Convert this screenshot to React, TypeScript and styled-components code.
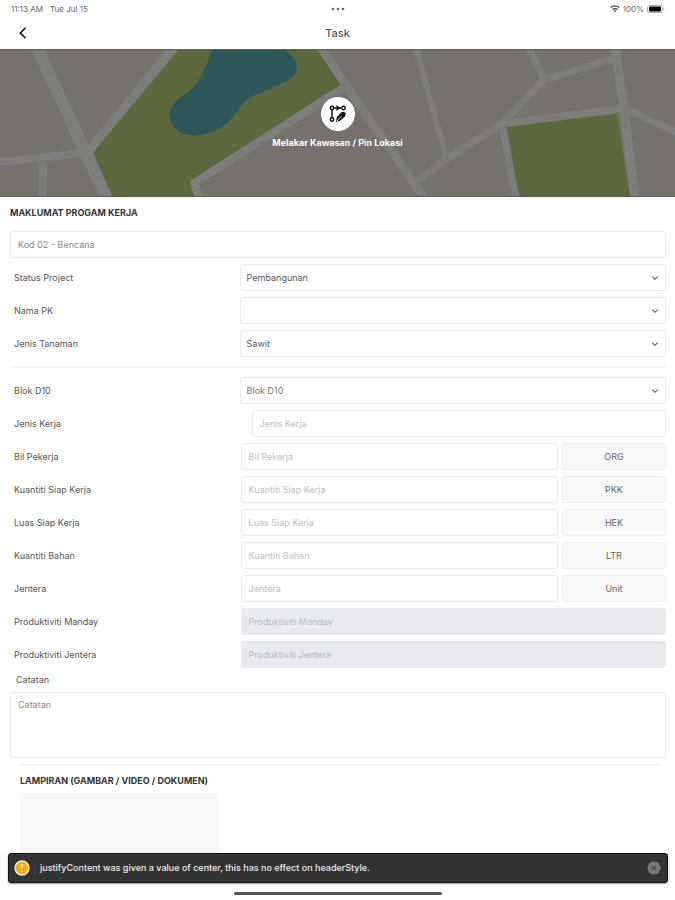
import React from "react";
import styled, { createGlobalStyle } from "styled-components";

const GlobalStyle = createGlobalStyle`
  *, *::before, *::after { box-sizing: border-box; }
  body {
    margin: 0;
    background: #fff;
    color: #555;
    font-family: Inter, "Liberation Sans", sans-serif;
    font-size: 9px;
    line-height: 12px;
  }
  button, input, select, textarea { font: inherit; margin: 0; }
`;

const Screen = styled.div`
  height: 100vh;
  overflow: hidden;
  display: flex;
  flex-direction: column;
`;

const StatusBar = styled.div`
  display: grid;
  grid-template-columns: 1fr auto 1fr;
  align-items: center;
  flex: none;
  height: 17px;
  padding: 0 10px 0 11px;
  font-size: 8px;
  color: #666;
`;

const StatusGroup = styled.div<{ $end?: boolean }>`
  display: flex;
  align-items: center;
  gap: ${(p) => (p.$end ? 3 : 7)}px;
  justify-content: ${(p) => (p.$end ? "flex-end" : "flex-start")};
`;

const Header = styled.header`
  display: grid;
  grid-template-columns: 1fr auto 1fr;
  align-items: center;
  flex: none;
  height: 32px;
  padding: 0 16px;
`;

const BackButton = styled.button`
  display: flex;
  width: 14px;
  padding: 0;
  border: 0;
  background: none;
  color: #111;
`;

const Title = styled.h1`
  margin: 0;
  font-size: 11px;
  font-weight: 500;
  line-height: 16px;
  color: #555;
`;

const MapBanner = styled.section`
  display: grid;
  flex: none;
  height: 148px;
  border-top: 1px solid #5f5f5c;
  border-bottom: 1px solid #595957;
  background: #75726b;
  & > * { grid-area: 1 / 1; }
`;

const MapArt = styled.svg`
  display: block;
  width: 100%;
  height: 146px;
`;

const DrawButton = styled.button`
  z-index: 1;
  place-self: center;
  display: flex;
  flex-direction: column;
  align-items: center;
  gap: 6px;
  padding: 0;
  border: 0;
  background: none;
  color: #fff;
  font-size: 9px;
  font-weight: 700;
`;

const DrawCircle = styled.span`
  display: grid;
  place-items: center;
  width: 34px;
  height: 34px;
  border-radius: 50%;
  background: #fff;
  color: #111;
`;

const Form = styled.form`
  display: flex;
  flex-direction: column;
  gap: 6px;
  padding: 10px 9px 0 10px;
`;

const SectionTitle = styled.h2<{ $inset?: boolean }>`
  margin: ${(p) => (p.$inset ? "3px 0 0 10px" : "0 0 6px")};
  font-size: 9px;
  line-height: 12px;
  font-weight: 700;
  color: #333;
`;

const Row = styled.div`
  display: grid;
  grid-template-columns: 35fr 65fr;
  align-items: center;
`;

const Label = styled.label`
  padding-left: 4px;
`;

const NoteLabel = styled.label`
  padding-left: 6px;
`;

const Field = styled.div<{ $indent?: number }>`
  display: flex;
  gap: 4px;
  padding-left: ${(p) => p.$indent ?? 0}px;
`;

const Input = styled.input<{ $muted?: boolean }>`
  min-width: 0;
  width: 100%;
  height: 27px;
  padding: 0 7px;
  border: 1px solid #ececec;
  border-radius: 3px;
  background: #fff;
  color: #777;
  &::placeholder { color: ${(p) => (p.$muted ? "#888" : "#c0c0c0")}; opacity: 1; }
  &:disabled { background: #e8eaed; border-color: #e8eaed; }
  &:disabled::placeholder { color: #b8bcc2; }
`;

const SelectBox = styled.div`
  flex: 1;
  display: grid;
  align-items: center;
  & > * { grid-area: 1 / 1; }
  & > svg { justify-self: end; margin-right: 7px; pointer-events: none; }
`;

const Select = styled.select<{ $soft?: boolean }>`
  appearance: none;
  width: 100%;
  height: 27px;
  padding: 0 24px 0 6px;
  border: 1px solid #ececec;
  border-radius: 3px;
  background: #fff;
  color: ${(p) => (p.$soft ? "#777" : "#555")};
`;

const UnitButton = styled.button`
  flex: none;
  width: 104px;
  height: 27px;
  padding: 0;
  border: 1px solid #efefef;
  border-radius: 3px;
  background: #f8f8f8;
  color: #666;
`;

const Divider = styled.hr<{ $inset?: boolean }>`
  width: auto;
  height: 2px;
  margin: ${(p) => (p.$inset ? "0 6px 0 10px" : "3px 0 3px")};
  border: 0;
  background: #f5f5f5;
`;

const Notes = styled.textarea`
  display: block;
  width: 100%;
  height: 66px;
  padding: 6px 7px;
  resize: none;
  border: 1px solid #ececec;
  border-radius: 3px;
  &::placeholder { color: #888; opacity: 1; }
`;

const NotesGroup = styled.div`
  display: flex;
  flex-direction: column;
  gap: 6px;
`;

const Attachment = styled.div`
  width: 30%;
  min-width: 198px;
  height: 90px;
  margin-left: 10px;
  border: 1px solid #f3f5f6;
  border-radius: 3px;
  background: #f8f9fb;
`;

const BottomOverlay = styled.div`
  position: fixed;
  left: 0;
  right: 0;
  bottom: 0;
  display: flex;
  flex-direction: column;
  align-items: center;
  gap: 9px;
  padding: 0 7px 5px 8px;
  background: #fff;
`;

const Toast = styled.div`
  display: flex;
  align-items: center;
  gap: 4px;
  width: 100%;
  height: 30px;
  padding: 0 6px 0 5px;
  border: 1px solid #111;
  border-radius: 3px;
  background: #333;
  color: #eee;
  box-shadow: 0 1px 2px #0006;
`;

const ToastText = styled.span`
  flex: 1;
  padding-left: 5px;
  border-left: 1px solid #444;
  font-weight: 500;
`;

const DismissButton = styled.button`
  display: flex;
  padding: 0;
  border: 0;
  background: none;
`;

const HomeBar = styled.div`
  width: 208px;
  height: 3px;
  border-radius: 2px;
  background: #555;
`;

const Chevron = () => (
  <svg width="8" height="8" viewBox="0 0 8 8" fill="none" stroke="#555" strokeWidth="1.1" aria-hidden="true">
    <path d="M1.3 2.7 4 5.3l2.7-2.6" />
  </svg>
);

const TownMap = () => (
  <MapArt viewBox="0 0 675 146" preserveAspectRatio="xMidYMid slice" aria-hidden="true">
    <path d="M179 0H317L341 35 190 133 195 147H113L93 102Z" fill="#5c693e" />
    <path d="M507 77 617 64 630 147H519Z" fill="#5c693e" />
    <path
      d="M211 0C206 23 197 35 187 43C173 51 167 61 171 71C175 83 187 87 200 85C215 83 227 76 235 64C243 53 248 47 261 43C278 35 297 29 297 18C297 10 291 5 286 0Z"
      fill="#2e575a"
    />
    <g fill="none" stroke="#7d7e7b" strokeLinejoin="round">
      <path d="M37-2 107 149" strokeWidth="12" />
      <path d="M173-2 88 102" strokeWidth="9" />
      <path d="M0 112 82 103M43 112 42 149" strokeWidth="8" />
      <path d="M321-2 345 34 417 138 425 149" strokeWidth="8" />
      <path d="M346 36 194 133 200 149" strokeWidth="8" />
      <path d="M416-2 446 107" strokeWidth="6" />
      <path d="M417 131 445 110 503 73 544 30 615 8M529-2 544 30" strokeWidth="7" />
      <path d="M615-2 624 58 635 149" strokeWidth="9" />
      <path d="M501 74 624 58 680 84M502 75 516 149" strokeWidth="7" />
    </g>
  </MapArt>
);

const AreaIcon = () => (
  <svg width="20" height="20" viewBox="0 0 20 20" fill="none" stroke="currentColor" strokeWidth="1.5" aria-hidden="true">
    <circle cx="4" cy="4" r="1.700" />
    <circle cx="15.500" cy="4" r="1.700" />
    <circle cx="4" cy="15.500" r="1.700" />
    <path d="M4 6v8M6 4h7" />
    <path d="M8.500 1 12.300 4 8.500 7Z" fill="currentColor" stroke="none" />
    <path d="M8 18 8.800 13 13.500 8.300Q16.500 7 17.700 9.500L17 12.200 12.500 16.500Z" fill="currentColor" stroke="none" />
    <path d="m9 17 4.500-5" stroke="#fff" strokeWidth=".9" />
  </svg>
);

type SelectRowProps = { id: string; label: string; value: string; soft?: boolean };
const SelectRow = ({ id, label, value, soft }: SelectRowProps) => (
  <Row>
    <Label htmlFor={id}>{label}</Label>
    <Field>
      <SelectBox>
        <Select id={id} defaultValue={value} $soft={soft}>
          <option value={value}>{value}</option>
        </Select>
        <Chevron />
      </SelectBox>
    </Field>
  </Row>
);

type InputRowProps = { id: string; label: string; unit?: string; indent?: number; disabled?: boolean };
const InputRow = ({ id, label, unit, indent = 1, disabled }: InputRowProps) => (
  <Row>
    <Label htmlFor={id}>{label}</Label>
    <Field $indent={indent}>
      <Input id={id} placeholder={label} disabled={disabled} />
      {unit && <UnitButton type="button">{unit}</UnitButton>}
    </Field>
  </Row>
);

const measures = [
  { id: "workers", label: "Bil Pekerja", unit: "ORG" },
  { id: "done", label: "Kuantiti Siap Kerja", unit: "PKK" },
  { id: "area", label: "Luas Siap Kerja", unit: "HEK" },
  { id: "material", label: "Kuantiti Bahan", unit: "LTR" },
  { id: "machine", label: "Jentera", unit: "Unit" },
];

export default function App() {
  return (
    <Screen>
      <GlobalStyle />
      <StatusBar>
        <StatusGroup>
          <span>11:13 AM</span>
          <span>Tue Jul 15</span>
        </StatusGroup>
        <svg width="14" height="4" viewBox="0 0 14 4" fill="#666" aria-hidden="true">
          <circle cx="2" cy="2" r="1.300" />
          <circle cx="7" cy="2" r="1.300" />
          <circle cx="12" cy="2" r="1.300" />
        </svg>
        <StatusGroup $end>
          <svg width="10" height="8" viewBox="0 0 10 8" fill="none" stroke="#444" strokeWidth="1.300" aria-hidden="true">
            <path d="M.7 2.600Q5-.7 9.300 2.600M2.500 4.500q2.500-1.900 5 0" />
            <path d="M3.700 5.700q1.300-.9 2.600 0L5 7.200Z" fill="#444" stroke="none" />
          </svg>
          <span>100%</span>
          <svg width="18" height="8" viewBox="0 0 18 8" aria-hidden="true">
            <rect x=".5" y=".5" width="15" height="7" rx="2" fill="#fff" stroke="#aaa" />
            <rect x="2" y="1.500" width="12" height="5" rx="1" fill="#000" />
            <path d="M16.500 3v2q1-.3 1-1t-1-1" fill="#aaa" />
          </svg>
        </StatusGroup>
      </StatusBar>
      <Header>
        <BackButton type="button" aria-label="Kembali">
          <svg width="14" height="14" viewBox="0 0 14 14" fill="none" stroke="currentColor" strokeWidth="1.600" aria-hidden="true">
            <path d="M9.500 1.800 4.300 7l5.200 5.200" />
          </svg>
        </BackButton>
        <Title>Task</Title>
      </Header>
      <MapBanner>
        <TownMap />
        <DrawButton type="button">
          <DrawCircle>
            <AreaIcon />
          </DrawCircle>
          Melakar Kawasan / Pin Lokasi
        </DrawButton>
      </MapBanner>
      <Form>
        <SectionTitle>MAKLUMAT PROGAM KERJA</SectionTitle>
        <Input aria-label="Kod" placeholder="Kod 02 - Bencana" $muted />
        <SelectRow id="status" label="Status Project" value="Pembangunan" />
        <SelectRow id="pk" label="Nama PK" value="" />
        <SelectRow id="crop" label="Jenis Tanaman" value="Sawit" />
        <Divider />
        <SelectRow id="block" label="Blok D10" value="Blok D10" soft />
        <InputRow id="work" label="Jenis Kerja" indent={12} />
        {measures.map((m) => (
          <InputRow key={m.id} {...m} />
        ))}
        <InputRow id="manday" label="Produktiviti Manday" disabled />
        <InputRow id="prodMachine" label="Produktiviti Jentera" disabled />
        <NotesGroup>
          <NoteLabel htmlFor="notes">Catatan</NoteLabel>
          <Notes id="notes" placeholder="Catatan" />
        </NotesGroup>
        <Divider $inset />
        <SectionTitle $inset>LAMPIRAN (GAMBAR / VIDEO / DOKUMEN)</SectionTitle>
        <Attachment />
      </Form>
      <BottomOverlay>
        <Toast role="alert">
          <svg width="16" height="16" viewBox="0 0 16 16" aria-hidden="true">
            <circle cx="8" cy="8" r="7" fill="#f7ab1b" stroke="#fff1cf" strokeWidth="1.300" />
            <path d="M8 4v5M8 10.500v1.500" stroke="#fff1cf" strokeWidth="1.400" />
          </svg>
          <ToastText>justifyContent was given a value of center, this has no effect on headerStyle.</ToastText>
          <DismissButton type="button" aria-label="Tutup">
            <svg width="14" height="14" viewBox="0 0 14 14" aria-hidden="true">
              <circle cx="7" cy="7" r="6.500" fill="#777" />
              <path d="m4.800 4.800 4.400 4.400m0-4.400L4.800 9.200" stroke="#444" strokeWidth="1.200" />
            </svg>
          </DismissButton>
        </Toast>
        <HomeBar />
      </BottomOverlay>
    </Screen>
  );
}
